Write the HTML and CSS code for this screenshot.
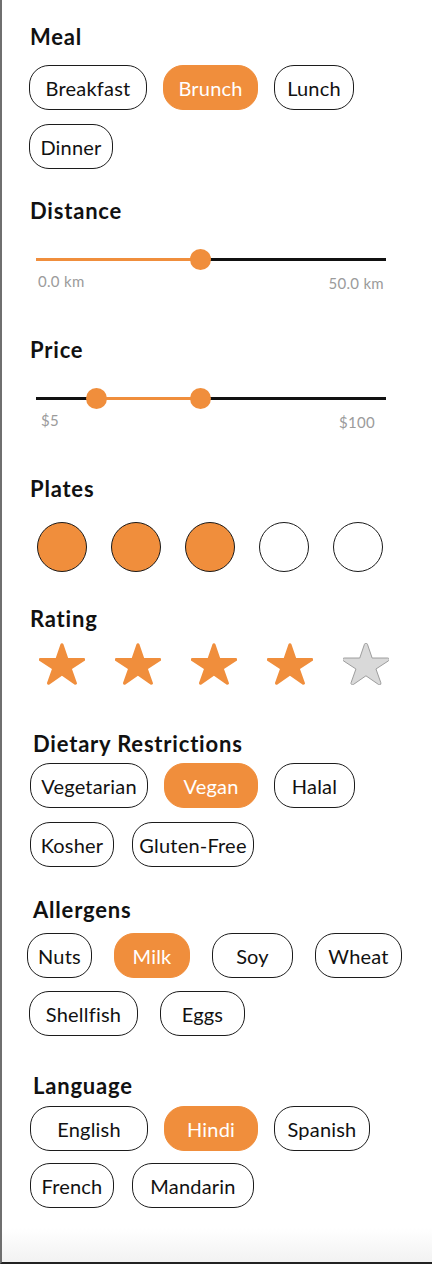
FILE: index.html
```html
<!DOCTYPE html>
<html>
<head>
<meta charset="utf-8">
<link rel="stylesheet" href="styles.css">
</head>
<body>
<div class="page">
  <h2 class="heading">Meal</h2>
  <div class="chips chips-meal">
    <div class="chip w118">Breakfast</div>
    <div class="chip w95 active">Brunch</div>
    <div class="chip w80">Lunch</div>
    <div class="chip w84">Dinner</div>
  </div>

  <h2 class="heading sec-distance">Distance</h2>
  <div class="slider">
    <div class="track">
      <div class="fill" style="left:0;width:164px"></div>
      <div class="thumb" style="left:164px"></div>
    </div>
    <div class="labels labels-km">
      <span>0.0 km</span>
      <span class="lbl-right">50.0 km</span>
    </div>
  </div>

  <h2 class="heading sec-gap48">Price</h2>
  <div class="slider">
    <div class="track">
      <div class="fill" style="left:60px;width:104px"></div>
      <div class="thumb" style="left:60px"></div>
      <div class="thumb" style="left:164px"></div>
    </div>
    <div class="labels labels-price">
      <span>$5</span>
      <span class="lbl-right">$100</span>
    </div>
  </div>

  <h2 class="heading sec-gap48">Plates</h2>
  <div class="plates">
    <div class="plate on"></div>
    <div class="plate on"></div>
    <div class="plate on"></div>
    <div class="plate"></div>
    <div class="plate"></div>
  </div>

  <h2 class="heading sec-rating">Rating</h2>
  <div class="stars">
    <svg class="star on" viewBox="20 30 473 453" preserveAspectRatio="none"><path d="M394 480a16 16 0 01-9.39-3L256 383.76 127.39 477a16 16 0 01-24.55-18.08L153 310.35 23 221.2a16 16 0 019-29.2h160.38l48.4-148.95a16 16 0 0130.44 0l48.4 149H480a16 16 0 019.05 29.2L359 310.35l50.13 148.53A16 16 0 01394 480z"/></svg>
    <svg class="star on" viewBox="20 30 473 453" preserveAspectRatio="none"><path d="M394 480a16 16 0 01-9.39-3L256 383.76 127.39 477a16 16 0 01-24.55-18.08L153 310.35 23 221.2a16 16 0 019-29.2h160.38l48.4-148.95a16 16 0 0130.44 0l48.4 149H480a16 16 0 019.05 29.2L359 310.35l50.13 148.53A16 16 0 01394 480z"/></svg>
    <svg class="star on" viewBox="20 30 473 453" preserveAspectRatio="none"><path d="M394 480a16 16 0 01-9.39-3L256 383.76 127.39 477a16 16 0 01-24.55-18.08L153 310.35 23 221.2a16 16 0 019-29.2h160.38l48.4-148.95a16 16 0 0130.44 0l48.4 149H480a16 16 0 019.05 29.2L359 310.35l50.13 148.53A16 16 0 01394 480z"/></svg>
    <svg class="star on" viewBox="20 30 473 453" preserveAspectRatio="none"><path d="M394 480a16 16 0 01-9.39-3L256 383.76 127.39 477a16 16 0 01-24.55-18.08L153 310.35 23 221.2a16 16 0 019-29.2h160.38l48.4-148.95a16 16 0 0130.44 0l48.4 149H480a16 16 0 019.05 29.2L359 310.35l50.13 148.53A16 16 0 01394 480z"/></svg>
    <svg class="star off" viewBox="20 30 473 453" preserveAspectRatio="none"><path d="M394 480a16 16 0 01-9.39-3L256 383.76 127.39 477a16 16 0 01-24.55-18.08L153 310.35 23 221.2a16 16 0 019-29.2h160.38l48.4-148.95a16 16 0 0130.44 0l48.4 149H480a16 16 0 019.05 29.2L359 310.35l50.13 148.53A16 16 0 01394 480z"/></svg>
  </div>

  <h2 class="heading indent sec-dietary">Dietary Restrictions</h2>
  <div class="chips chips-dietary">
    <div class="chip w118">Vegetarian</div>
    <div class="chip w94 active">Vegan</div>
    <div class="chip w81">Halal</div>
    <div class="chip w84">Kosher</div>
    <div class="chip w122 gap18">Gluten-Free</div>
  </div>

  <h2 class="heading indent sec-allergens">Allergens</h2>
  <div class="chips chips-allergens">
    <div class="chip w65">Nuts</div>
    <div class="chip w76 active">Milk</div>
    <div class="chip w81">Soy</div>
    <div class="chip w87">Wheat</div>
    <div class="chip w109 first2">Shellfish</div>
    <div class="chip w85">Eggs</div>
  </div>

  <h2 class="heading indent sec-language">Language</h2>
  <div class="chips chips-language">
    <div class="chip w118">English</div>
    <div class="chip w94 active">Hindi</div>
    <div class="chip w96">Spanish</div>
    <div class="chip w84">French</div>
    <div class="chip w122 gap18">Mandarin</div>
  </div>
</div>
</body>
</html>
```

FILE: styles.css
```css
* { box-sizing: border-box; }
html, body { margin: 0; padding: 0; }
body {
  font-family: Lato, "Noto Sans", "DejaVu Sans", sans-serif;
  color: #111;
  background: #fff;
}
.page {
  height: 1264px;
  border-left: 2px solid #6f6f6f;
  border-bottom: 2px solid #222;
  padding: 25px 30px 0 28px;
  background: linear-gradient(to bottom, #ffffff calc(100% - 34px), #f2f2f2 100%);
  overflow: hidden;
}
.heading {
  margin: 0;
  font-size: 22px;
  line-height: 24px;
  font-weight: 700;
  letter-spacing: 0.8px;
  color: #111;
}
.indent { margin-left: 3px; }
.sec-distance { margin-top: 30px; }
.sec-gap48 { margin-top: 48px; }
.sec-rating { margin-top: 35px; }
.sec-dietary { margin-top: 47px; }
.sec-allergens { margin-top: 31px; }
.sec-language { margin-top: 38px; }

.chips {
  display: flex;
  flex-wrap: wrap;
  column-gap: 16px;
  margin-left: -1px;
}
.chips-meal { margin-top: 16px; row-gap: 14px; }
.chips-dietary { margin-top: 7px; row-gap: 14px; margin-left: 0; }
.chips-allergens { margin-top: 11px; row-gap: 13px; column-gap: 22px; margin-left: -3px; }
.chips-language { margin-top: 8px; row-gap: 12px; margin-left: 0; }
.chip {
  height: 45px;
  border: 1px solid #1c1c1c;
  border-radius: 20px;
  display: flex;
  align-items: center;
  justify-content: center;
  font-size: 20px;
  line-height: 24px;
  letter-spacing: 0.2px;
  color: #111;
  white-space: nowrap;
  background: #fff;
}
.chip.active {
  background: #f08e3c;
  border-color: #f08e3c;
  color: #fff;
}
.gap18 { margin-left: 2px; }
.first2 { margin-left: 2px; }
.w65 { width: 65px; }
.w76 { width: 76px; }
.w80 { width: 80px; }
.w81 { width: 81px; }
.w84 { width: 84px; }
.w85 { width: 85px; }
.w87 { width: 87px; }
.w94 { width: 94px; }
.w95 { width: 95px; }
.w96 { width: 96px; }
.w109 { width: 109px; }
.w118 { width: 118px; }
.w122 { width: 122px; }

.slider {
  margin-left: 6px;
  width: 350px;
}
.track {
  position: relative;
  height: 3px;
  margin-top: 35px;
  background: #111;
}
.fill {
  position: absolute;
  top: 0;
  height: 3px;
  background: #f08e3c;
}
.thumb {
  position: absolute;
  top: -9px;
  width: 21px;
  height: 21px;
  margin-left: -10px;
  border-radius: 50%;
  background: #f08e3c;
}
.labels {
  display: flex;
  justify-content: space-between;
  margin-top: 12px;
  font-size: 15px;
  line-height: 17px;
  letter-spacing: 0.3px;
  color: #9b9b9b;
}
.labels-km { padding: 0 2px 0 2px; }
.labels-price { padding: 0 11px 0 5px; }
.lbl-right { position: relative; top: 2px; }

.plates {
  display: flex;
  gap: 24px;
  margin-top: 21px;
  margin-left: 7px;
}
.plate {
  width: 50px;
  height: 50px;
  border-radius: 50%;
  border: 1px solid #1a1a1a;
  background: #fff;
}
.plate.on { background: #f08e3c; }

.stars {
  display: flex;
  gap: 30px;
  margin-top: 12px;
  margin-left: 9px;
  height: 42px;
}
.star {
  width: 46px;
  height: 42px;
  display: block;
}
.star.on path { fill: #f08e3c; }
.star.off path {
  fill: #d9d9d9;
  stroke: #9d9d9d;
  stroke-width: 1px;
  vector-effect: non-scaling-stroke;
}
```
